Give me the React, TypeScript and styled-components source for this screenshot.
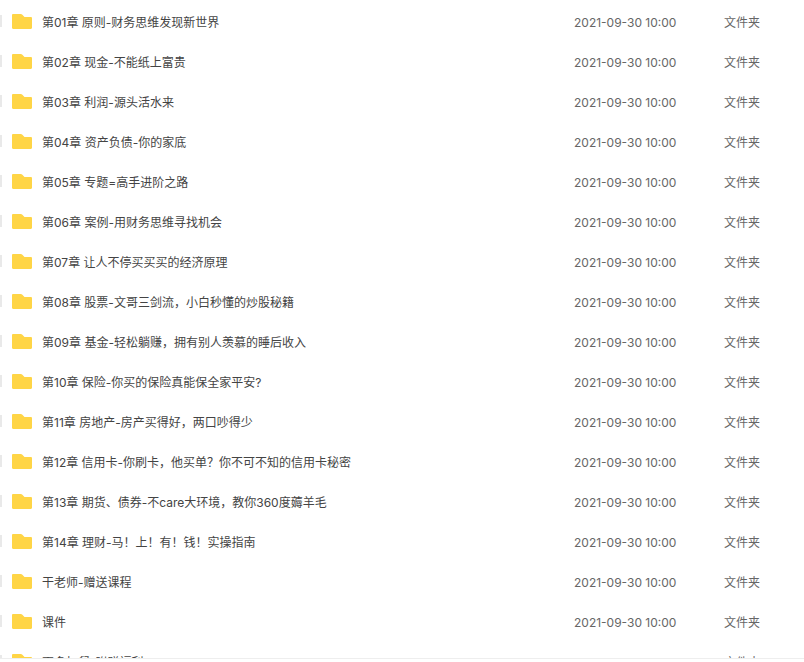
import styled, { createGlobalStyle } from 'styled-components';

const folders = [
  '第01章 原则-财务思维发现新世界',
  '第02章 现金-不能纸上富贵',
  '第03章 利润-源头活水来',
  '第04章 资产负债-你的家底',
  '第05章 专题=高手进阶之路',
  '第06章 案例-用财务思维寻找机会',
  '第07章 让人不停买买买的经济原理',
  '第08章 股票-文哥三剑流，小白秒懂的炒股秘籍',
  '第09章 基金-轻松躺赚，拥有别人羡慕的睡后收入',
  '第10章 保险-你买的保险真能保全家平安?',
  '第11章 房地产-房产买得好，两口吵得少',
  '第12章 信用卡-你刷卡，他买单？你不可不知的信用卡秘密',
  '第13章 期货、债券-不care大环境，教你360度薅羊毛',
  '第14章 理财-马！上！有！钱！实操指南',
  '干老师-赠送课程',
  '课件',
  '更多加餐-附赠福利',
];

function FolderIcon() {
  return (
    <svg width="20" height="15" viewBox="0 0 20 15">
      <path
        d="M0 1.200C0 .5.5 0 1.200 0h7.600c.5 0 1 .2 1.300.6L12.500 3h6.300c.7 0 1.200.5 1.200 1.200v9.600c0 .7-.5 1.200-1.200 1.200H1.200C.5 15 0 14.500 0 13.800Z"
        fill="#ffd546"
      />
    </svg>
  );
}

export default function App() {
  return (
    <>
      <GlobalStyle />
      <Page>
        <List>
          {folders.map((name) => (
            <Row key={name}>
              <Check />
              <FolderIcon />
              <Name>{name}</Name>
              <Time>2021-09-30 10:00</Time>
              <Kind>文件夹</Kind>
            </Row>
          ))}
        </List>
        <BottomEdge />
      </Page>
    </>
  );
}

const GlobalStyle = createGlobalStyle`
  html, body {
    margin: 0;
    height: 100%;
    overflow: hidden;
    background: #fff;
  }
`;

const Page = styled.div`
  position: relative;
  width: 804px;
  height: 662px;
  overflow: hidden;
  font-family: Inter, 'Noto Sans CJK SC', sans-serif;
  font-size: 12px;
  color: #666;
`;

const List = styled.div`
  display: flex;
  flex-direction: column;
  padding-top: 1px;
`;

const Row = styled.div`
  display: flex;
  align-items: center;
  height: 40px;
  flex-shrink: 0;
`;

const Check = styled.span`
  width: 2px;
  height: 12px;
  margin-right: 10px;
  background: #e9e9e9;
`;

const Name = styled.span`
  width: 532px;
  margin-left: 10px;
  color: #444;
`;

const Time = styled.span`
  width: 150px;
  padding-top: 2px;
`;

const Kind = styled.span``;

const BottomEdge = styled.div`
  position: absolute;
  left: 0;
  right: 0;
  bottom: 0;
  height: 3px;
  background: #fff;
  border-top: 1px solid #eee;
`;
